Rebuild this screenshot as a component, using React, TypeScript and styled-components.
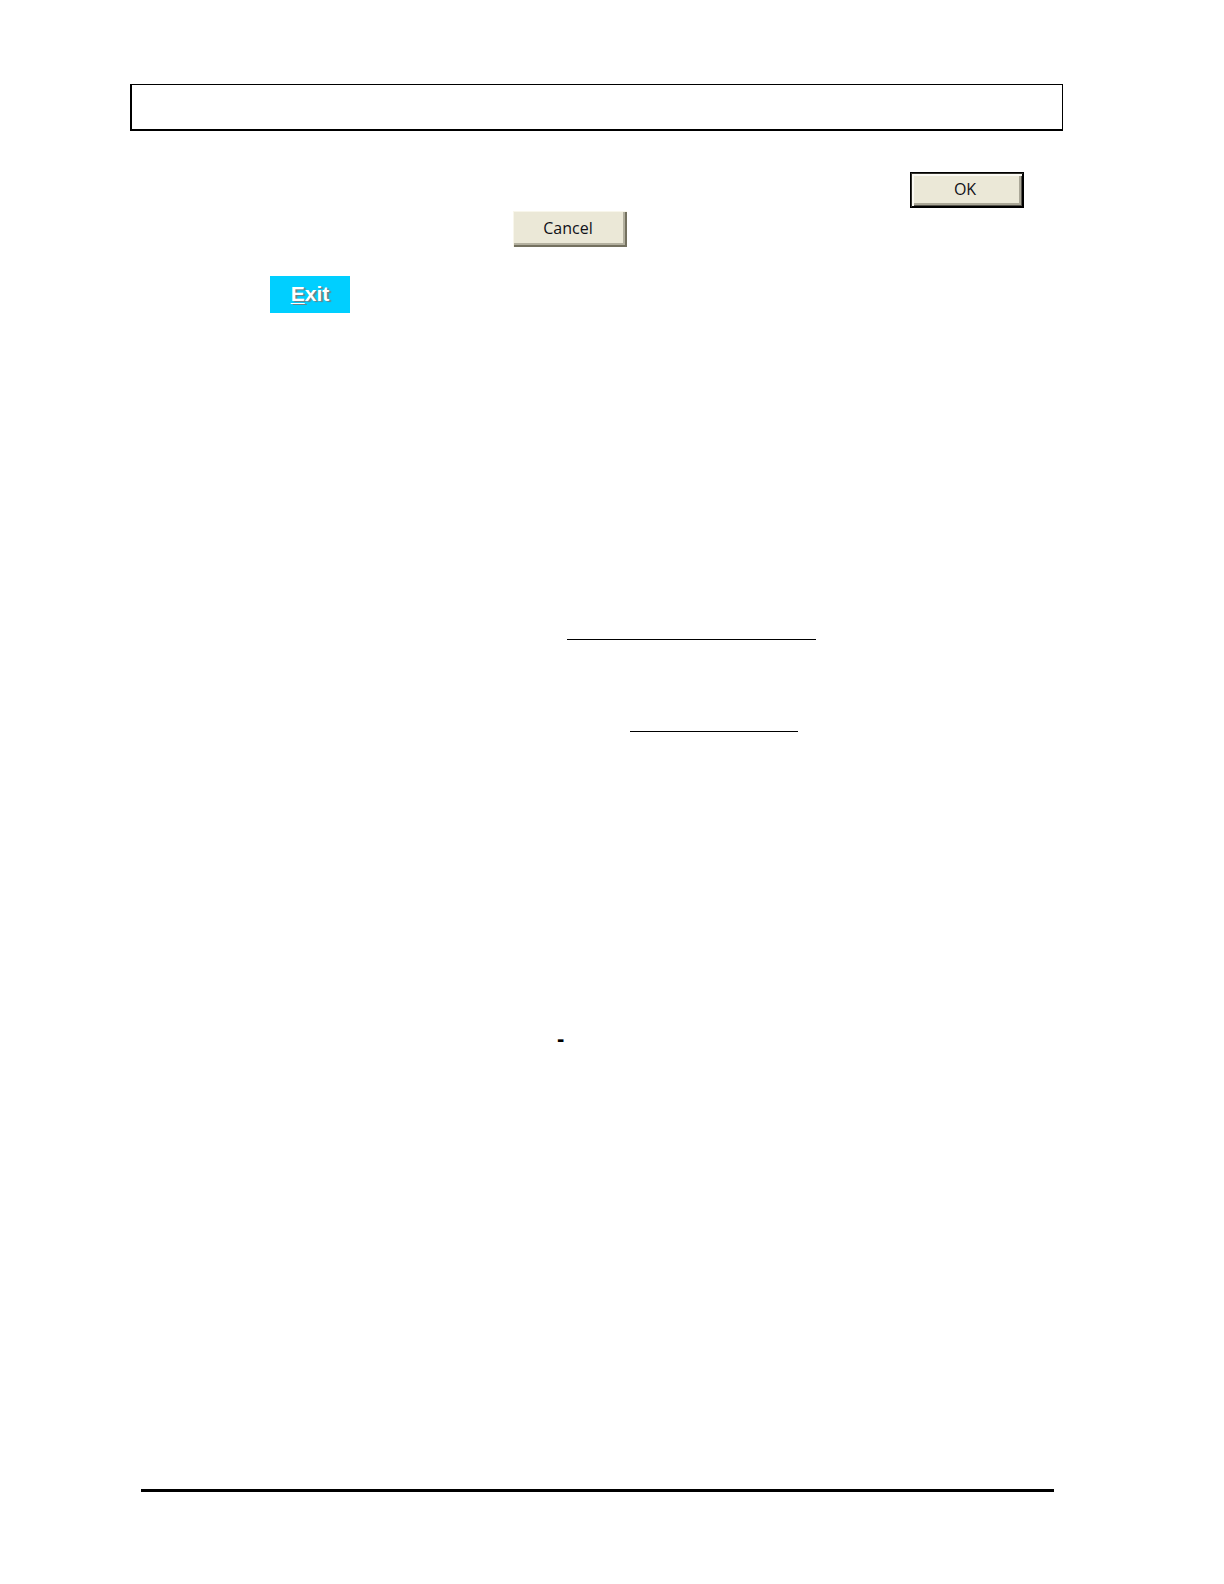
import React from "react";
import styled, { createGlobalStyle } from "styled-components";

const GlobalStyle = createGlobalStyle`
  *, *::before, *::after { box-sizing: border-box; }
  body { margin: 0; background: #fff; color: #000; font-family: "Liberation Sans", Arial, sans-serif; }
`;

const Page = styled.div`
  display: flex;
  flex-direction: column;
  padding: 84px 161px 92px 130px;
`;

const HeaderBox = styled.header`
  height: 47px;
  border: solid #000;
  border-width: 1px 1px 2px 2px;
`;

const Content = styled.main`
  display: flex;
  flex-direction: column;
  padding: 41px 39px 0 140px;
`;

const Row = styled.div<{ $align?: string; $indent?: number; $gap?: number }>`
  display: flex;
  justify-content: ${(p) => p.$align ?? "flex-start"};
  padding-left: ${(p) => p.$indent ?? 0}px;
  margin-top: ${(p) => p.$gap ?? 0}px;
`;

const DialogButton = styled.button<{ $default?: boolean }>`
  width: 114px;
  height: 36px;
  padding: 0 4px 2px 0;
  border: ${(p) => (p.$default ? "1px solid #000" : "0")};
  background: #ebe8d7;
  color: #101018;
  font: 16px/20px "Open Sans", "Noto Sans", sans-serif;
  box-shadow: ${(p) =>
    p.$default
      ? "inset 1px 1px #33322c, inset -1px -1px #000, inset 3px 3px #faf9f2, inset -2px -2px #55534b, inset -4px -4px #aaa797"
      : "inset 1px 1px #f8f6eb, inset -2px -2px #74715f, inset -4px -4px #b3b09f"};
`;

const ExitButton = styled.button`
  width: 80px;
  height: 37px;
  padding: 0 0 1px;
  border: 0;
  background: #00cfff;
  color: #fff;
  font: bold 21px/24px "Liberation Sans", Arial, sans-serif;
  text-shadow: 2px 1px 1px #6f7f84;
`;

const AccessKey = styled.span`
  text-decoration: underline;
  text-decoration-thickness: 1px;
  text-underline-offset: 2px;
`;

const Rule = styled.hr<{ $width: number }>`
  width: ${(p) => p.$width}px;
  height: 1px;
  margin: 0;
  border: 0;
  background: #000;
`;

const Dash = styled.p`
  margin: 0;
  font: bold 22px/24px "Liberation Sans", Arial, sans-serif;
`;

const FooterRule = styled.hr`
  height: 3px;
  margin: 0 9px 0 11px;
  border: 0;
  background: #000;
  align-self: stretch;
`;

const Footer = styled.footer`
  display: flex;
  flex-direction: column;
  padding-top: 438px;
`;

export default function App() {
  return (
    <>
      <GlobalStyle />
      <Page>
        <HeaderBox />
        <Content>
          <Row $align="flex-end">
            <DialogButton type="button" $default>OK</DialogButton>
          </Row>
          <Row $indent={243} $gap={3}>
            <DialogButton type="button">Cancel</DialogButton>
          </Row>
          <Row $gap={29}>
            <ExitButton type="button"><AccessKey>E</AccessKey>xit</ExitButton>
          </Row>
          <Row $indent={297} $gap={326}>
            <Rule $width={249} />
          </Row>
          <Row $indent={360} $gap={91}>
            <Rule $width={168} />
          </Row>
          <Row $indent={287} $gap={295}>
            <Dash>-</Dash>
          </Row>
        </Content>
        <Footer>
          <FooterRule />
        </Footer>
      </Page>
    </>
  );
}
